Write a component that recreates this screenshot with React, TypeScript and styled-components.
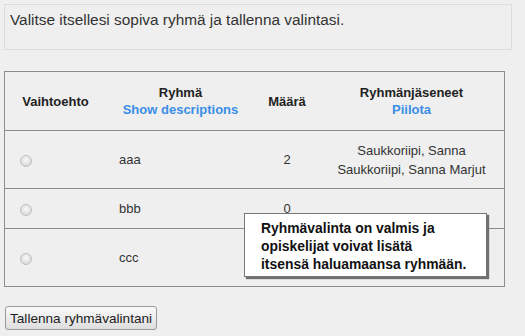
import styled, { createGlobalStyle } from 'styled-components';

const GlobalStyle = createGlobalStyle`
  body {
    margin: 0;
    background: #efefef;
    font-family: "Liberation Sans", Arial, sans-serif;
    color: #222;
  }
`;

const Page = styled.div`
  position: relative;
  padding: 4px;
  width: 525px;
  height: 336px;
  box-sizing: border-box;
`;

const InfoBox = styled.div`
  width: 508px;
  height: 46px;
  box-sizing: border-box;
  border: 1px solid #dcdcdc;
  padding: 6px 5px;
  font-size: 15.4px;
  color: #333;
`;

const Table = styled.table`
  margin-top: 21px;
  width: 501px;
  border-collapse: collapse;
  border: 1px solid #8c8c8c;
  font-size: 13px;
`;

const HeadCell = styled.th`
  height: 58px;
  padding: 0;
  font-weight: bold;
  color: #222;
  text-align: center;
  line-height: 17px;
  border-bottom: 1px solid #8c8c8c;
`;

const Link = styled.a`
  color: #3a8ee6;
  text-decoration: none;
  display: block;
`;

interface RowProps {
  $h: number;
}

const Row = styled.tr<RowProps>`
  height: ${(p) => p.$h}px;
  border-bottom: 1px solid #8c8c8c;
`;

interface CellProps {
  $align?: string;
  $pad?: number;
}

const Cell = styled.td<CellProps>`
  padding: 0 0 0 ${(p) => p.$pad ?? 0}px;
  text-align: ${(p) => p.$align ?? 'center'};
  line-height: 19px;
  color: #333;
  font-size: 13px;
`;

const Radio = styled.span`
  display: inline-block;
  width: 10px;
  height: 10px;
  border-radius: 50%;
  border: 1px solid #c0c0c0;
  background: radial-gradient(circle at 50% 40%, #fafafa 0%, #e0e0e0 60%, #cccccc 100%);
  vertical-align: middle;
`;

const SaveButton = styled.button`
  margin-top: 19px;
  margin-left: 1px;
  height: 24px;
  padding: 0 4px;
  font-family: "Liberation Sans", Arial, sans-serif;
  font-size: 13.6px;
  color: #222;
  background: linear-gradient(#fafafa, #dedede);
  border: 1px solid #9a9a9a;
  border-radius: 3px;
`;

const Tooltip = styled.div`
  position: absolute;
  left: 244px;
  top: 213px;
  width: 243px;
  height: 64px;
  box-sizing: border-box;
  background: #fff;
  border: 1px solid #777;
  box-shadow: 2px 2px 1px #6f6f6f;
  padding: 5px 8px 0 16px;
  font-size: 13.9px;
  font-weight: bold;
  line-height: 18px;
  color: #111;
`;

const groups = [
  { name: 'aaa', count: 2, members: ['Saukkoriipi, Sanna', 'Saukkoriipi, Sanna Marjut'], h: 58 },
  { name: 'bbb', count: 0, members: [], h: 40 },
  { name: 'ccc', count: 2, members: ['Saukkoriipi, Sanna', 'Saukkoriipi, Sanna Marjut'], h: 58 },
];

export default function App() {
  return (
    <Page>
      <GlobalStyle />
      <InfoBox>Valitse itsellesi sopiva ryhmä ja tallenna valintasi.</InfoBox>
      <Table>
        <thead>
          <tr>
            <HeadCell style={{ width: 101 }}>Vaihtoehto</HeadCell>
            <HeadCell style={{ width: 149 }}>
              Ryhmä
              <Link href="#">Show descriptions</Link>
            </HeadCell>
            <HeadCell style={{ width: 64 }}>Määrä</HeadCell>
            <HeadCell>
              Ryhmänjäseneet
              <Link href="#">Piilota</Link>
            </HeadCell>
          </tr>
        </thead>
        <tbody>
          {groups.map((g) => (
            <Row key={g.name} $h={g.h}>
              <Cell $align="left" $pad={15}>
                <Radio />
              </Cell>
              <Cell $align="left" $pad={13}>{g.name}</Cell>
              <Cell>{g.count}</Cell>
              <Cell>
                {g.members.map((m) => (
                  <div key={m}>{m}</div>
                ))}
              </Cell>
            </Row>
          ))}
        </tbody>
      </Table>
      <SaveButton>Tallenna ryhmävalintani</SaveButton>
      <Tooltip>
        Ryhmävalinta on valmis ja
        <br />
        opiskelijat voivat lisätä
        <br />
        itsensä haluamaansa ryhmään.
      </Tooltip>
    </Page>
  );
}
